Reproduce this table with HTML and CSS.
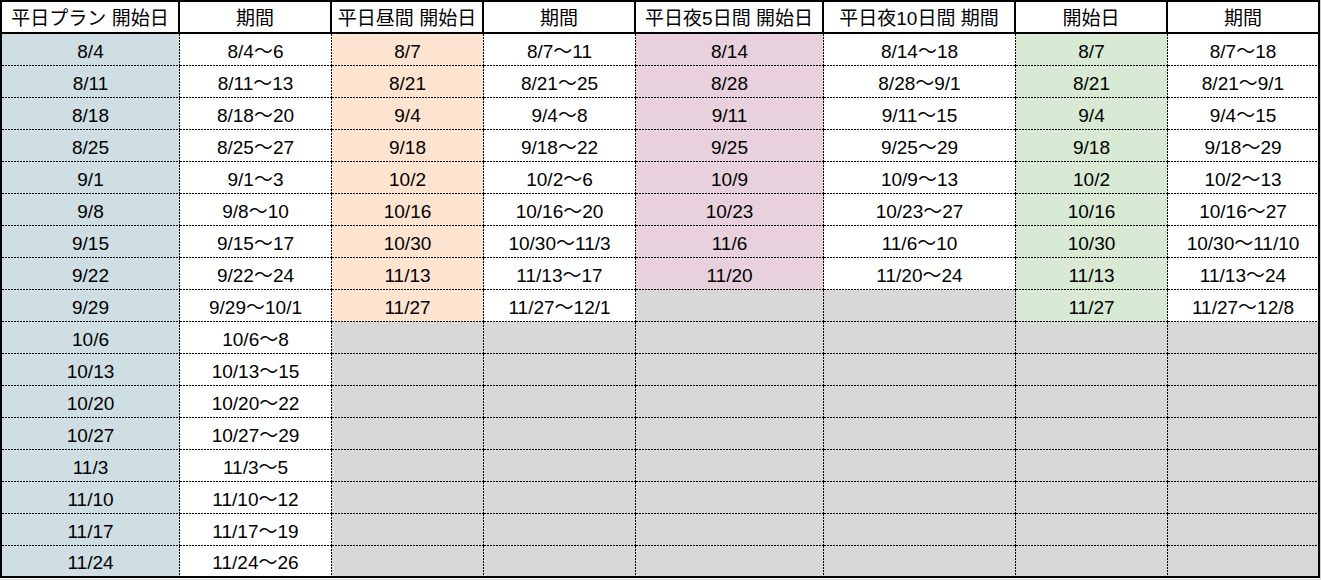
FILE: index.html
```html
<!DOCTYPE html>
<html lang="ja">
<head>
<meta charset="utf-8">
<title>日程表</title>
<link rel="stylesheet" href="styles.css">
</head>
<body>
<div class="sheet">
<table class="plan">
<colgroup>
<col class="w1"><col class="w2"><col class="w2"><col class="w2"><col class="w5"><col class="w6"><col class="w2"><col class="w8">
</colgroup>
<thead>
<tr>
<th>平日プラン 開始日</th><th>期間</th><th>平日昼間 開始日</th><th>期間</th><th>平日夜5日間 開始日</th><th>平日夜10日間 期間</th><th>開始日</th><th class="last">期間</th>
</tr>
</thead>
<tbody>
<tr><td class="b">8/4</td><td>8/4～6</td><td class="o">8/7</td><td>8/7～11</td><td class="p">8/14</td><td>8/14～18</td><td class="g">8/7</td><td class="last">8/7～18</td></tr>
<tr><td class="b">8/11</td><td>8/11～13</td><td class="o">8/21</td><td>8/21～25</td><td class="p">8/28</td><td>8/28～9/1</td><td class="g">8/21</td><td class="last">8/21～9/1</td></tr>
<tr><td class="b">8/18</td><td>8/18～20</td><td class="o">9/4</td><td>9/4～8</td><td class="p">9/11</td><td>9/11～15</td><td class="g">9/4</td><td class="last">9/4～15</td></tr>
<tr><td class="b">8/25</td><td>8/25～27</td><td class="o">9/18</td><td>9/18～22</td><td class="p">9/25</td><td>9/25～29</td><td class="g">9/18</td><td class="last">9/18～29</td></tr>
<tr><td class="b">9/1</td><td>9/1～3</td><td class="o">10/2</td><td>10/2～6</td><td class="p">10/9</td><td>10/9～13</td><td class="g">10/2</td><td class="last">10/2～13</td></tr>
<tr><td class="b">9/8</td><td>9/8～10</td><td class="o">10/16</td><td>10/16～20</td><td class="p">10/23</td><td>10/23～27</td><td class="g">10/16</td><td class="last">10/16～27</td></tr>
<tr><td class="b">9/15</td><td>9/15～17</td><td class="o">10/30</td><td>10/30～11/3</td><td class="p">11/6</td><td>11/6～10</td><td class="g">10/30</td><td class="last">10/30～11/10</td></tr>
<tr><td class="b">9/22</td><td>9/22～24</td><td class="o">11/13</td><td>11/13～17</td><td class="p">11/20</td><td>11/20～24</td><td class="g">11/13</td><td class="last">11/13～24</td></tr>
<tr><td class="b">9/29</td><td>9/29～10/1</td><td class="o">11/27</td><td>11/27～12/1</td><td class="e"></td><td class="e"></td><td class="g">11/27</td><td class="last">11/27～12/8</td></tr>
<tr><td class="b">10/6</td><td>10/6～8</td><td class="e"></td><td class="e"></td><td class="e"></td><td class="e"></td><td class="e"></td><td class="e last"></td></tr>
<tr><td class="b">10/13</td><td>10/13～15</td><td class="e"></td><td class="e"></td><td class="e"></td><td class="e"></td><td class="e"></td><td class="e last"></td></tr>
<tr><td class="b">10/20</td><td>10/20～22</td><td class="e"></td><td class="e"></td><td class="e"></td><td class="e"></td><td class="e"></td><td class="e last"></td></tr>
<tr><td class="b">10/27</td><td>10/27～29</td><td class="e"></td><td class="e"></td><td class="e"></td><td class="e"></td><td class="e"></td><td class="e last"></td></tr>
<tr><td class="b">11/3</td><td>11/3～5</td><td class="e"></td><td class="e"></td><td class="e"></td><td class="e"></td><td class="e"></td><td class="e last"></td></tr>
<tr><td class="b">11/10</td><td>11/10～12</td><td class="e"></td><td class="e"></td><td class="e"></td><td class="e"></td><td class="e"></td><td class="e last"></td></tr>
<tr><td class="b">11/17</td><td>11/17～19</td><td class="e"></td><td class="e"></td><td class="e"></td><td class="e"></td><td class="e"></td><td class="e last"></td></tr>
<tr class="end"><td class="b">11/24</td><td>11/24～26</td><td class="e"></td><td class="e"></td><td class="e"></td><td class="e"></td><td class="e"></td><td class="e last"></td></tr>
</tbody>
</table>
</div>
</body>
</html>
```

FILE: styles.css
```css
html, body {
  margin: 0;
  padding: 0;
  background: #ffffff;
}

.sheet {
  width: 1320px;
  height: 579px;
  border-right: 1px solid #d4d4d4;
  border-bottom: 1px solid #e2e2e2;
}

.plan {
  table-layout: fixed;
  width: 1320px;
  border-collapse: separate;
  border-spacing: 0;
  border-top: 2px solid #000;
  border-left: 2px solid #000;
  font-family: "Liberation Sans", "Noto Sans CJK JP", sans-serif;
  font-size: 19px;
  color: #000;
}

.w1 { width: 178px; }
.w2 { width: 152px; }
.w5 { width: 188px; }
.w6 { width: 192px; }
.w8 { width: 152px; }

.plan tr {
  height: 32px;
}

.plan th,
.plan td {
  box-sizing: border-box;
  padding: 4px 0 0 0;
  text-align: center;
  vertical-align: middle;
  white-space: nowrap;
  line-height: 22px;
  font-weight: normal;
  overflow: hidden;
}

.plan th {
  border-right: 2px solid #000;
  border-bottom: 2px solid #000;
  background: #fff;
}

.plan td {
  border-right: 1px solid transparent;
  border-bottom: 1px solid transparent;
  background-color: #fff;
  background-image:
    repeating-linear-gradient(to right, #000 0 2px, transparent 2px 3px),
    repeating-linear-gradient(to bottom, #000 0 2px, transparent 2px 3px);
  background-size: 100% 1px, 1px 100%;
  background-position: left bottom, right top;
  background-repeat: no-repeat;
  background-origin: border-box;
  background-clip: border-box;
}

.plan td.last {
  border-right: 2px solid #000;
}

.plan tr.end td {
  border-bottom: 2px solid #000;
}

.plan td.b { background-color: #cfdee2; }
.plan td.o { background-color: #fce4d0; }
.plan td.p { background-color: #e8d1dc; }
.plan td.g { background-color: #d8e9d4; }
.plan td.e { background-color: #d8d8d8; }
```
